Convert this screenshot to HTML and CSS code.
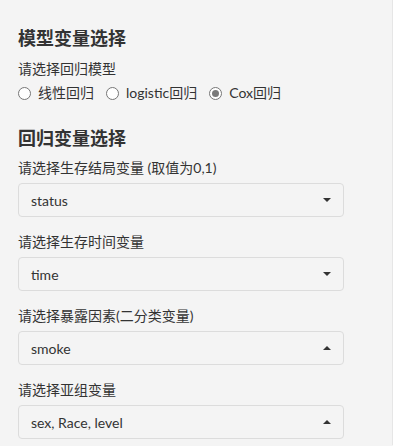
FILE: index.html
```html
<!DOCTYPE html>
<html lang="zh">
<head>
<meta charset="utf-8">
<link rel="stylesheet" href="styles.css">
</head>
<body>
<div class="well">
  <h3 class="title first">模型变量选择</h3>
  <div class="label">请选择回归模型</div>
  <div class="radios">
    <label class="radio"><span class="circle"></span>线性回归</label>
    <label class="radio"><span class="circle"></span>logistic回归</label>
    <label class="radio"><span class="circle checked"></span>Cox回归</label>
  </div>
  <h3 class="title second">回归变量选择</h3>
  <div class="group">
    <div class="label">请选择生存结局变量 (取值为0,1)</div>
    <div class="select"><span>status</span><span class="caret down"></span></div>
  </div>
  <div class="group">
    <div class="label">请选择生存时间变量</div>
    <div class="select"><span>time</span><span class="caret down"></span></div>
  </div>
  <div class="group">
    <div class="label">请选择暴露因素(二分类变量)</div>
    <div class="select"><span>smoke</span><span class="caret up"></span></div>
  </div>
  <div class="group">
    <div class="label">请选择亚组变量</div>
    <div class="select"><span>sex, Race, level</span><span class="caret up"></span></div>
  </div>
</div>
</body>
</html>
```
FILE: styles.css
```css
html, body {
  margin: 0;
  padding: 0;
  background: #f4f4f4;
}
body {
  font-family: "Lato", "Noto Sans CJK SC", sans-serif;
  color: #333;
  font-size: 14px;
}
.well {
  box-sizing: border-box;
  width: 393px;
  height: 446px;
  padding: 26px 48px 0 18px;
  border-top: 1px solid #e6e6e6;
  border-right: 1px solid #e6e6e6;
  margin-top: -1px;
  background: #f4f4f4;
}
.title {
  margin: 0;
  font-size: 18px;
  line-height: 24px;
  font-weight: 700;
  color: #333;
}
.title.first { margin-top: 0; margin-bottom: 9px; }
.title.second { margin-top: 23px; margin-bottom: 8px; }
.label {
  line-height: 20px;
  font-size: 14px;
  margin-bottom: 5px;
}
.radios {
  display: flex;
  gap: 12px;
  line-height: 20px;
  margin-top: -1px;
}
.radio {
  display: flex;
  align-items: center;
  gap: 7px;
}
.circle {
  box-sizing: border-box;
  width: 13px;
  height: 13px;
  border-radius: 50%;
  border: 1px solid #767676;
  background: #fff;
  display: inline-flex;
  align-items: center;
  justify-content: center;
}
.circle.checked::after {
  content: "";
  width: 7px;
  height: 7px;
  border-radius: 50%;
  background: #7a7a7a;
}
.group {
  margin-bottom: 15px;
}
.select {
  box-sizing: border-box;
  height: 34px;
  border: 1px solid #dcdcdc;
  border-radius: 4px;
  background: #f4f4f4;
  display: flex;
  align-items: center;
  justify-content: space-between;
  padding: 0 12px 0 12px;
  font-size: 14px;
}
.caret {
  width: 0;
  height: 0;
  border-left: 4px solid transparent;
  border-right: 4px solid transparent;
}
.caret.down { border-top: 4px solid #333; }
.caret.up { border-bottom: 4px solid #333; }
```
